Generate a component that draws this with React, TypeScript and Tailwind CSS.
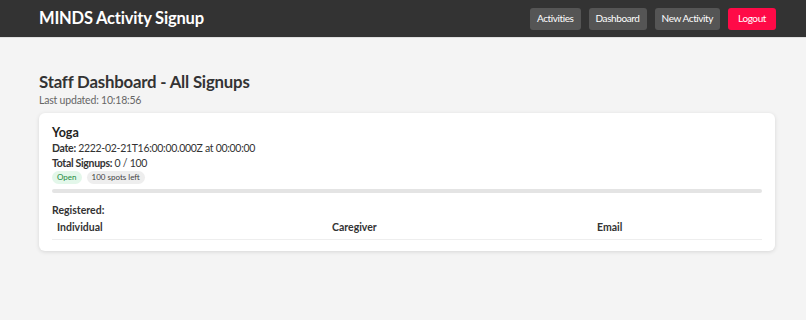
const App = () => {
	return (
		<div
			className="min-h-[320px] bg-[#f4f4f4] text-[#222]"
			style={{ fontFamily: 'Lato, "Noto Sans", sans-serif' }}
		>
			<header className="flex h-[38px] items-center justify-between bg-[#333333] pl-[39px] pr-[30px] border-b border-[#e0e0e0]">
				<h1 className="text-[16.5px] font-bold tracking-[-0.2px] text-white">MINDS Activity Signup</h1>
				<nav className="flex items-center gap-2">
					<button className="h-[22px] rounded-[3px] bg-[#555555] px-[7px] text-[10px] tracking-[-0.4px] text-white">
						Activities
					</button>
					<button className="h-[22px] rounded-[3px] bg-[#555555] px-[7px] text-[10px] tracking-[-0.4px] text-white">
						Dashboard
					</button>
					<button className="h-[22px] rounded-[3px] bg-[#555555] px-[7px] text-[10px] tracking-[-0.4px] text-white">
						New Activity
					</button>
					<button className="h-[22px] rounded-[3px] bg-[#ff0a47] px-[10px] text-[10px] tracking-[-0.4px] text-white">
						Logout
					</button>
				</nav>
			</header>

			<main className="pl-[39px] pr-[31px] pt-[33px]">
				<h2 className="text-[16.8px] font-bold leading-[22px] tracking-[-0.2px] text-[#333]">
					Staff Dashboard - All Signups
				</h2>
				<p className="text-[10.5px] leading-[14px] tracking-[-0.2px] text-[#666]">Last updated: 10:18:56</p>

				<div className="mt-[6px] rounded-[6px] bg-white px-[13px] pt-[12px] pb-[11px] shadow-[0_1px_4px_rgba(0,0,0,0.12)]">
					<h3 className="text-[12.5px] font-bold leading-[16px] text-[#222]">Yoga</h3>
					<p className="text-[10.5px] leading-[15px] tracking-[-0.3px] text-[#333]">
						<span className="font-bold">Date:</span> 2222-02-21T16:00:00.000Z at 00:00:00
					</p>
					<p className="text-[10.5px] leading-[14px] tracking-[-0.3px] text-[#333]">
						<span className="font-bold">Total Signups:</span> 0 / 100
					</p>
					<div className="mt-[1px] flex gap-[5px]">
						<span className="rounded-full bg-[#e3f7ea] px-[5px] text-[8px] leading-[13px] text-[#1e8a3e]">
							Open
						</span>
						<span className="rounded-full bg-[#eeeeee] px-[5px] text-[8px] leading-[13px] text-[#444]">
							100 spots left
						</span>
					</div>
					<div className="mt-[5px] h-[4px] rounded-full bg-[#e4e4e4]" />

					<p className="mt-[10px] text-[10.5px] font-bold leading-[14px] text-[#333]">Registered:</p>
					<table className="w-full border-collapse text-left text-[10.5px]">
						<thead>
							<tr className="border-b border-[#eeeeee]">
								<th className="w-[275px] px-[5px] py-[3px] font-bold text-[#333]">Individual</th>
								<th className="w-[265px] px-[5px] py-[3px] font-bold text-[#333]">Caregiver</th>
								<th className="px-[5px] py-[3px] font-bold text-[#333]">Email</th>
							</tr>
						</thead>
						<tbody />
					</table>
				</div>
			</main>
		</div>
	);
};

export default App;
